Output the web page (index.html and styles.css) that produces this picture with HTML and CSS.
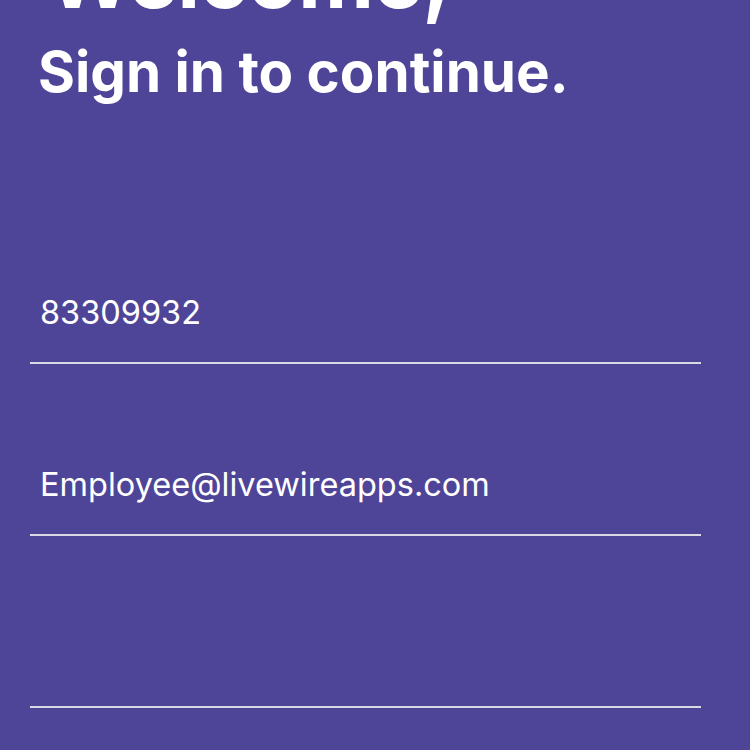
FILE: index.html
```html
<!DOCTYPE html>
<html>
<head>
<meta charset="utf-8">
<link rel="stylesheet" href="styles.css">
</head>
<body>
<main class="screen">
  <header class="titles">
    <h1 class="welcome">Welcome,</h1>
    <h2 class="subtitle">Sign in to continue.</h2>
  </header>
  <form class="form">
    <div class="field"><input class="input" type="text" value="83309932"></div>
    <div class="field"><input class="input" type="text" value="Employee@livewireapps.com"></div>
    <div class="field"><input class="input" type="password" value=""></div>
  </form>
</main>
</body>
</html>
```
FILE: styles.css
```css
html, body {
  margin: 0;
  padding: 0;
  background: #4f4598;
}
body {
  font-family: Inter, "Noto Sans", sans-serif;
  color: #ffffff;
  width: 750px;
  height: 750px;
  overflow: hidden;
}
.screen {
  display: flex;
  flex-direction: column;
}
.titles {
  display: flex;
  flex-direction: column;
  padding-left: 38px;
  margin-top: -84px;
}
.welcome {
  margin: 0;
  font-size: 83px;
  font-weight: 700;
  line-height: 124px;
  letter-spacing: -0.5px;
  padding-left: 9px;
}
.subtitle {
  margin: 0;
  font-size: 56.5px;
  font-weight: 700;
  line-height: 64px;
  letter-spacing: 0;
}
.form {
  display: flex;
  flex-direction: column;
  margin: 88px 49px 0 30px;
}
.field {
  height: 172px;
  border-bottom: 2px solid #d9d8e3;
  box-sizing: border-box;
  display: flex;
  align-items: flex-end;
  padding-bottom: 29px;
}
.input {
  width: 100%;
  background: transparent;
  border: none;
  outline: none;
  color: #ffffff;
  font-family: Inter, "Noto Sans", sans-serif;
  font-size: 32.5px;
  padding: 0 0 0 10px;
  line-height: 40px;
  height: 40px;
}
```
